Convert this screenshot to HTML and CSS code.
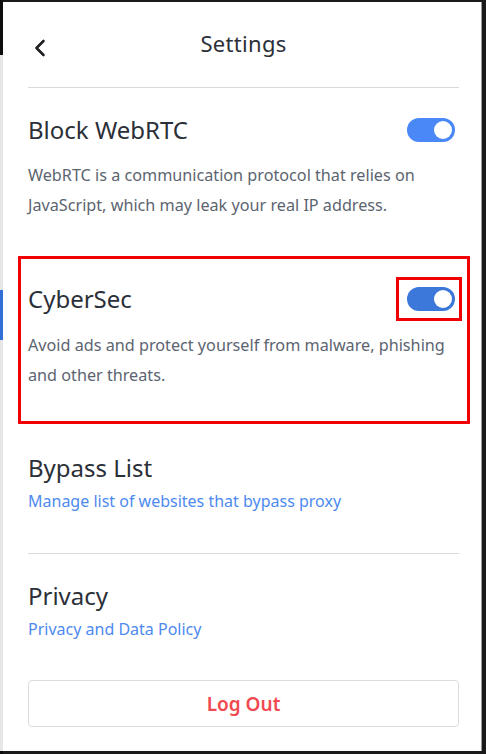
FILE: index.html
```html
<!DOCTYPE html>
<html>
<head>
<meta charset="utf-8">
<link rel="stylesheet" href="styles.css">
</head>
<body>
<div class="panel">
  <header class="header">
    <svg class="back" width="14" height="18" viewBox="0 0 14 18"><path d="M10.5 2 L3.5 9 L10.5 16" fill="none" stroke="#1d1f24" stroke-width="2.6" stroke-linecap="round" stroke-linejoin="round"/></svg>
    <h1 class="title">Settings</h1>
  </header>
  <div class="divider"></div>

  <section class="item first">
    <div class="row">
      <h2 class="heading">Block WebRTC</h2>
      <span class="toggle on"><span class="knob"></span></span>
    </div>
    <p class="desc">WebRTC is a communication protocol that relies on JavaScript, which may leak your real IP address.</p>
  </section>

  <section class="item highlight">
    <div class="row">
      <h2 class="heading">CyberSec</h2>
      <span class="toggle-frame"><span class="toggle on dark"><span class="knob"></span></span></span>
    </div>
    <p class="desc">Avoid ads and protect yourself from malware, phishing and other threats.</p>
  </section>

  <section class="item bypass">
    <h2 class="heading">Bypass List</h2>
    <a class="link">Manage list of websites that bypass proxy</a>
  </section>
  <div class="divider mid"></div>

  <section class="item privacy">
    <h2 class="heading">Privacy</h2>
    <a class="link">Privacy and Data Policy</a>
  </section>

  <button class="logout">Log Out</button>
</div>
</body>
</html>
```

FILE: styles.css
```css
html, body {
  margin: 0;
  padding: 0;
}
body {
  width: 486px;
  height: 754px;
  overflow: hidden;
  background:
    linear-gradient(to bottom, #0d0d0d 0, #0d0d0d 55px, #e6e6e6 55px, #e6e6e6 290px, #2f6fd6 290px, #2f6fd6 340px, #e6e6e6 340px, #e6e6e6 751px, #0d0d0d 751px) left top / 3px 754px no-repeat,
    #1a1a1a;
  font-family: "Noto Sans", "Liberation Sans", sans-serif;
}
.panel {
  box-sizing: border-box;
  margin: 2px 0 0 3px;
  width: 479px;
  height: 749px;
  background: #fff;
  padding: 0 22px 0 25px;
  border-right: 1px solid #9a9a9a;
}
.header {
  box-sizing: border-box;
  height: 85px;
  padding-bottom: 4px;
  display: flex;
  align-items: center;
  justify-content: center;
  position: relative;
}
.back {
  position: absolute;
  left: 5px;
  top: 37px;
}
.title {
  margin: 0;
  font-size: 22px;
  font-weight: 400;
  color: #2b2f38;
  letter-spacing: 0.3px;
}
.divider {
  height: 1px;
  background: #d9d9d9;
}
.row {
  display: flex;
  align-items: center;
  justify-content: space-between;
}
.heading {
  margin: 0;
  font-size: 24px;
  line-height: 30px;
  font-weight: 400;
  color: #2b2f38;
}
.desc {
  margin: 15px 0 0;
  font-size: 16.2px;
  line-height: 30px;
  color: #5c6470;
}
.item.first {
  margin-top: 27px;
}
.item.highlight {
  margin: 36px -11px 0 -10px;
  border: 3px solid #f00000;
  padding: 18px 5px 31px 7px;
}
.item.highlight .desc {
  margin-top: 9px;
}
.toggle {
  display: flex;
  align-items: center;
  justify-content: flex-end;
  box-sizing: border-box;
  width: 48px;
  height: 24px;
  border-radius: 12px;
  background: #4a87f7;
  padding: 3px;
  margin-right: 4px;
}
.toggle.dark {
  background: #3c77da;
  margin-right: 0;
}
.knob {
  width: 18px;
  height: 18px;
  border-radius: 50%;
  background: #fff;
}
.toggle-frame {
  display: flex;
  border: 3px solid #f00000;
  padding: 7px 4px 7px 8px;
}
.item.bypass {
  margin-top: 29px;
}
.link {
  display: block;
  margin-top: 6px;
  font-size: 16px;
  line-height: 24px;
  color: #4d8af0;
}
.divider.mid {
  margin-top: 40px;
}
.item.privacy {
  margin-top: 27px;
}
.logout {
  display: block;
  box-sizing: border-box;
  width: 431px;
  height: 47px;
  margin-top: 39px;
  background: #fff;
  border: 1px solid #dcdcdc;
  border-radius: 4px;
  font-family: inherit;
  font-size: 19px;
  font-weight: 600;
  color: #f04a50;
}
```
